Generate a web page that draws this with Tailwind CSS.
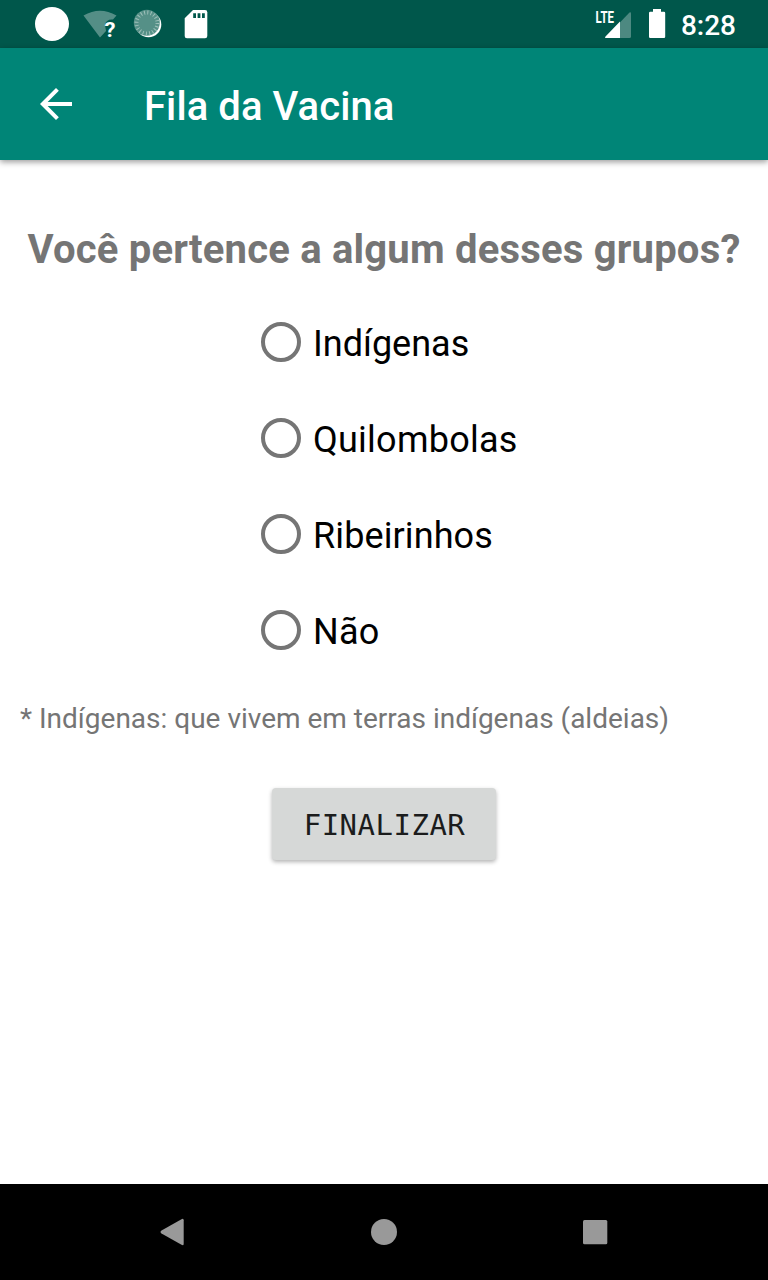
<!doctype html>
<html lang="pt-BR">
	<head>
		<meta charset="UTF-8" />
		<meta name="viewport" content="width=device-width, initial-scale=1.0" />
		<title>Fila da Vacina</title>
		<script src="https://cdn.jsdelivr.net/npm/@tailwindcss/browser@4"></script>
	</head>
	<body class="bg-white font-['Roboto',sans-serif]">
		<div class="flex flex-col h-[1280px] w-[768px] overflow-hidden">
			<!-- Status bar -->
			<div class="flex shrink-0 justify-between h-12 bg-[#00574b] text-white">
				<svg class="w-60 h-12" viewBox="0 0 240 48" fill="none">
					<circle cx="52" cy="24" r="17" fill="#fff" />
					<path d="M83.500 15.500Q100 6 116.500 15.500L113 19.500Q106 19 105 25L106 31L100 37.500Z" fill="#fff" fill-opacity=".33" />
					<text x="104.500" y="36.500" fill="#fff" class="text-[20.500px] font-bold" textLength="11" lengthAdjust="spacingAndGlyphs">?</text>
					<circle cx="148.500" cy="24.500" r="12.800" fill="#fff" />
					<circle cx="146.800" cy="22.800" r="13" fill="#559087" />
					<circle cx="147" cy="23" r="10.500" stroke="#9fc0ba" stroke-width="4" stroke-dasharray="1 2.300" />
					<path d="M193 10H205Q207.300 10 207.300 12.300V36Q207.300 38.300 205 38.300H187Q184.700 38.300 184.700 36V18.300Z" fill="#fff" />
					<path d="M193.200 13.300H196V18H193.200ZM197.600 13.300H200.400V18H197.600ZM202 13.300H204.800V18H202Z" fill="#00574b" />
				</svg>
				<div class="flex items-center pr-8">
					<svg class="w-[86px] h-12" viewBox="595 0 86 48" fill="none">
						<text x="595.500" y="22.800" fill="#fff" class="text-[17px] font-bold" textLength="18.500" lengthAdjust="spacingAndGlyphs">LTE</text>
						<path d="M605 38L629.500 12.500Q631 11.500 631 13.500V36.500Q631 38 629.500 38Z" fill="#fff" fill-opacity=".3" />
						<path d="M605.500 38Q604.500 37.500 605.500 36.500L620 21.500V38Z" fill="#fff" />
						<path d="M653 9H661V11.700H664Q665.200 11.700 665.200 13V36.800Q665.200 38 664 38H650.200Q649 38 649 36.800V13Q649 11.700 650.200 11.700H653Z" fill="#fff" />
					</svg>
					<span class="text-[28px] font-medium leading-none mt-[3px]">8:28</span>
				</div>
			</div>

			<!-- App bar -->
			<header
				class="flex shrink-0 items-center h-28 pl-8 gap-16 bg-[#008577] text-white shadow-[0_2px_6px_rgba(0,0,0,0.4)]"
			>
				<svg class="size-12" viewBox="0 0 24 24" fill="#fff">
					<path d="M20 11H7.830l5.590-5.590L12 4l-8 8 8 8 1.410-1.410L7.830 13H20v-2z" />
				</svg>
				<h1 class="text-[40px] font-medium leading-none pt-1.5 tracking-[0.08px]">Fila da Vacina</h1>
			</header>

			<!-- Question -->
			<main class="flex flex-col grow items-center pt-[66px]">
				<h2 class="text-[40px] font-bold leading-[47px] tracking-[0.2px] text-[#757575] whitespace-nowrap">
					Você pertence a algum desses grupos?
				</h2>
				<div class="flex flex-col w-[246px] mt-[21px]">
					<label class="flex items-center h-24 gap-3 text-4xl text-black">
						<input type="radio" name="grupo" class="appearance-none shrink-0 size-10 rounded-full border-4 border-[#757575]" />
						<span class="pt-[3px]">Indígenas</span>
					</label>
					<label class="flex items-center h-24 gap-3 text-4xl tracking-[0.25px] text-black">
						<input type="radio" name="grupo" class="appearance-none shrink-0 size-10 rounded-full border-4 border-[#757575]" />
						<span class="pt-[3px]">Quilombolas</span>
					</label>
					<label class="flex items-center h-24 gap-3 text-4xl tracking-[0.1px] text-black">
						<input type="radio" name="grupo" class="appearance-none shrink-0 size-10 rounded-full border-4 border-[#757575]" />
						<span class="pt-[3px]">Ribeirinhos</span>
					</label>
					<label class="flex items-center h-24 gap-3 text-4xl tracking-[0.2px] text-black">
						<input type="radio" name="grupo" class="appearance-none shrink-0 size-10 rounded-full border-4 border-[#757575]" />
						<span class="pt-[3px]">Não</span>
					</label>
				</div>
				<p class="self-start pl-5 mt-6 text-[28px] leading-[33px] text-[#757575] whitespace-nowrap">
					* Indígenas: que vivem em terras indígenas (aldeias)
				</p>
				<button
					class="w-56 h-[72px] mt-[53px] pt-1 pl-px rounded bg-[#d6d8d7] font-['DejaVu_Sans_Mono',monospace] text-[29px] tracking-[0.5px] text-[#1b1c1c] shadow-[0_2px_4px_rgba(0,0,0,0.3)]"
				>
					FINALIZAR
				</button>
			</main>

			<!-- Navigation bar -->
			<nav class="shrink-0 h-24 bg-black">
				<svg class="w-full h-24" viewBox="0 0 768 96" fill="#999">
					<path d="M161.500 46.500L181.500 35.200Q183.700 34 183.700 36.300V59.700Q183.700 62 181.500 60.800L161.500 49.500Q159.500 48 161.500 46.500Z" />
					<circle cx="384" cy="48" r="13" />
					<rect x="583" y="36" width="24.300" height="24.300" rx="1.500" />
				</svg>
			</nav>
		</div>
	</body>
</html>
